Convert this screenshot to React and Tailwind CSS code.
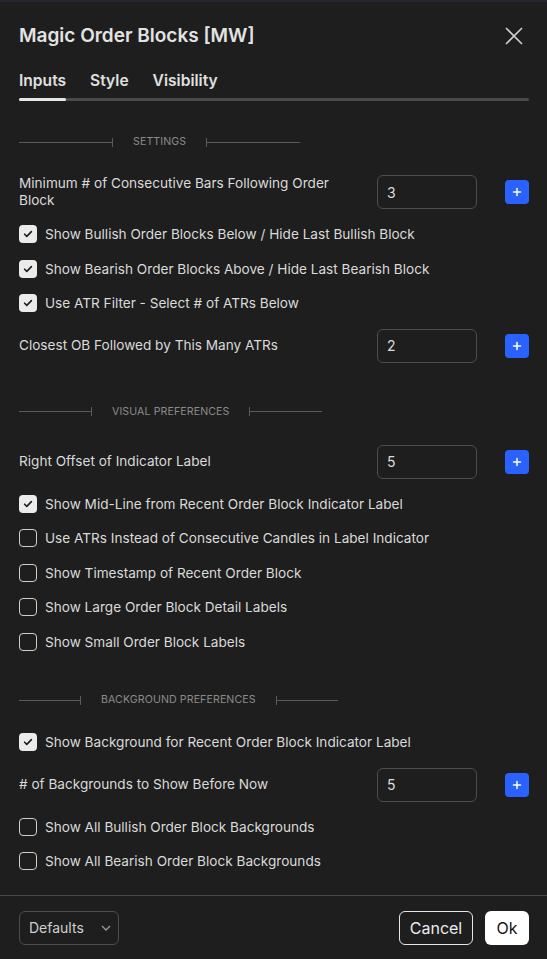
import React from "react";

const font = { fontFamily: "Inter, 'Noto Sans', sans-serif" };

function SectionHeader({ title, line }) {
  return (
    <div className="flex items-center h-[20px] mt-[31px] mb-[15px] px-[19px]">
      <div className="h-px bg-[#5a5a5a]" style={{ width: line }} />
      <div className="w-px h-[9px] bg-[#5a5a5a]" />
      <span className="mx-[20px] text-[10.6px] tracking-[0.01em] text-[#8b8b8b] uppercase">{title}</span>
      <div className="w-px h-[9px] bg-[#5a5a5a]" />
      <div className="h-px bg-[#5a5a5a]" style={{ width: line }} />
    </div>
  );
}

function Check({ checked, label }) {
  return (
    <div className="flex items-center h-[34.5px] px-[19px] gap-[8px]">
      {checked ? (
        <div className="w-[18px] h-[18px] rounded-[4px] bg-[#ebebeb] flex items-center justify-center">
          <svg width="12" height="12" viewBox="0 0 12 12" fill="none">
            <path d="M2.6 6.2l2.2 2.2 4.6-4.8" stroke="#1e1e1e" strokeWidth="1.6" strokeLinecap="round" strokeLinejoin="round" />
          </svg>
        </div>
      ) : (
        <div className="w-[18px] h-[18px] rounded-[4px] border border-[#cfcfcf]" />
      )}
      <span className="text-[13.6px] text-[#dadada]">{label}</span>
    </div>
  );
}

function NumberRow({ label, value }) {
  return (
    <div className="flex items-center py-[8px] pl-[19px] pr-[18px]">
      <div className="flex-1">
        <div className="w-[340px] text-[13.6px] leading-[17px] text-[#dadada]">{label}</div>
      </div>
      <div className="w-[100px] h-[34px] rounded-[6px] border border-[#4d4d4d] flex items-center pl-[9px] text-[14px] text-[#dcdcdc]">
        {value}
      </div>
      <div className="ml-[28px] w-[24px] h-[24px] rounded-[4px] bg-[#2962ff] flex items-center justify-center">
        <svg width="10" height="10" viewBox="0 0 10 10">
          <path d="M5 1.5v7M1.5 5h7" stroke="#fff" strokeWidth="1.5" strokeLinecap="round" />
        </svg>
      </div>
    </div>
  );
}

export default function App() {
  return (
    <div className="w-[547px] h-[959px] bg-[#1e1e1e] flex flex-col overflow-hidden" style={font}>
      <div className="h-[2px] bg-[#252830]" />
      <div className="h-[68px] flex items-center justify-between px-[19px]">
        <h1 className="text-[19px] font-semibold text-[#e3e3e3]">Magic Order Blocks [MW]</h1>
        <svg width="18" height="18" viewBox="0 0 18 18" className="mr-[5px]">
          <path d="M1 1l16 16M17 1L1 17" stroke="#cfcfcf" strokeWidth="1.6" />
        </svg>
      </div>
      <div className="pl-[19px] pr-[18px]">
        <div className="flex gap-[24px] h-[22px] items-center text-[15.6px] font-semibold text-[#e0e0e0]">
          <span>Inputs</span>
          <span>Style</span>
          <span>Visibility</span>
        </div>
        <div className="mt-[6px] h-[3px] rounded-full bg-[#4a4a4a] flex">
          <div className="w-[47px] h-[3px] rounded-full bg-[#e6e6e6]" />
        </div>
      </div>

      <div className="flex-1 overflow-hidden">
        <SectionHeader title="Settings" line={93} />
        <NumberRow label="Minimum # of Consecutive Bars Following Order Block" value="3" />
        <Check checked label="Show Bullish Order Blocks Below / Hide Last Bullish Block" />
        <Check checked label="Show Bearish Order Blocks Above / Hide Last Bearish Block" />
        <Check checked label="Use ATR Filter - Select # of ATRs Below" />
        <NumberRow label="Closest OB Followed by This Many ATRs" value="2" />

        <SectionHeader title="Visual Preferences" line={72} />
        <NumberRow label="Right Offset of Indicator Label" value="5" />
        <Check checked label="Show Mid-Line from Recent Order Block Indicator Label" />
        <Check label="Use ATRs Instead of Consecutive Candles in Label Indicator" />
        <Check label="Show Timestamp of Recent Order Block" />
        <Check label="Show Large Order Block Detail Labels" />
        <Check label="Show Small Order Block Labels" />

        <SectionHeader title="Background Preferences" line={61} />
        <Check checked label="Show Background for Recent Order Block Indicator Label" />
        <NumberRow label="# of Backgrounds to Show Before Now" value="5" />
        <Check label="Show All Bullish Order Block Backgrounds" />
        <Check label="Show All Bearish Order Block Backgrounds" />
      </div>

      <div className="h-[64px] shrink-0 border-t border-[#484848] flex items-center pl-[19px] pr-[18px]">
        <div className="w-[100px] h-[34px] rounded-[6px] border border-[#4d4d4d] flex items-center justify-between pl-[9px] pr-[7px] text-[14px] text-[#cfcfcf]">
          <span>Defaults</span>
          <svg width="10" height="6" viewBox="0 0 10 6">
            <path d="M1 1l4 4 4-4" stroke="#9a9a9a" strokeWidth="1.3" fill="none" />
          </svg>
        </div>
        <div className="flex-1" />
        <button className="w-[74px] h-[34px] rounded-[6px] border border-[#e6e6e6] text-[16px] text-[#ececec]">Cancel</button>
        <button className="ml-[12px] w-[44px] h-[34px] rounded-[6px] bg-white text-[16px] text-[#131313]">Ok</button>
      </div>
    </div>
  );
}
